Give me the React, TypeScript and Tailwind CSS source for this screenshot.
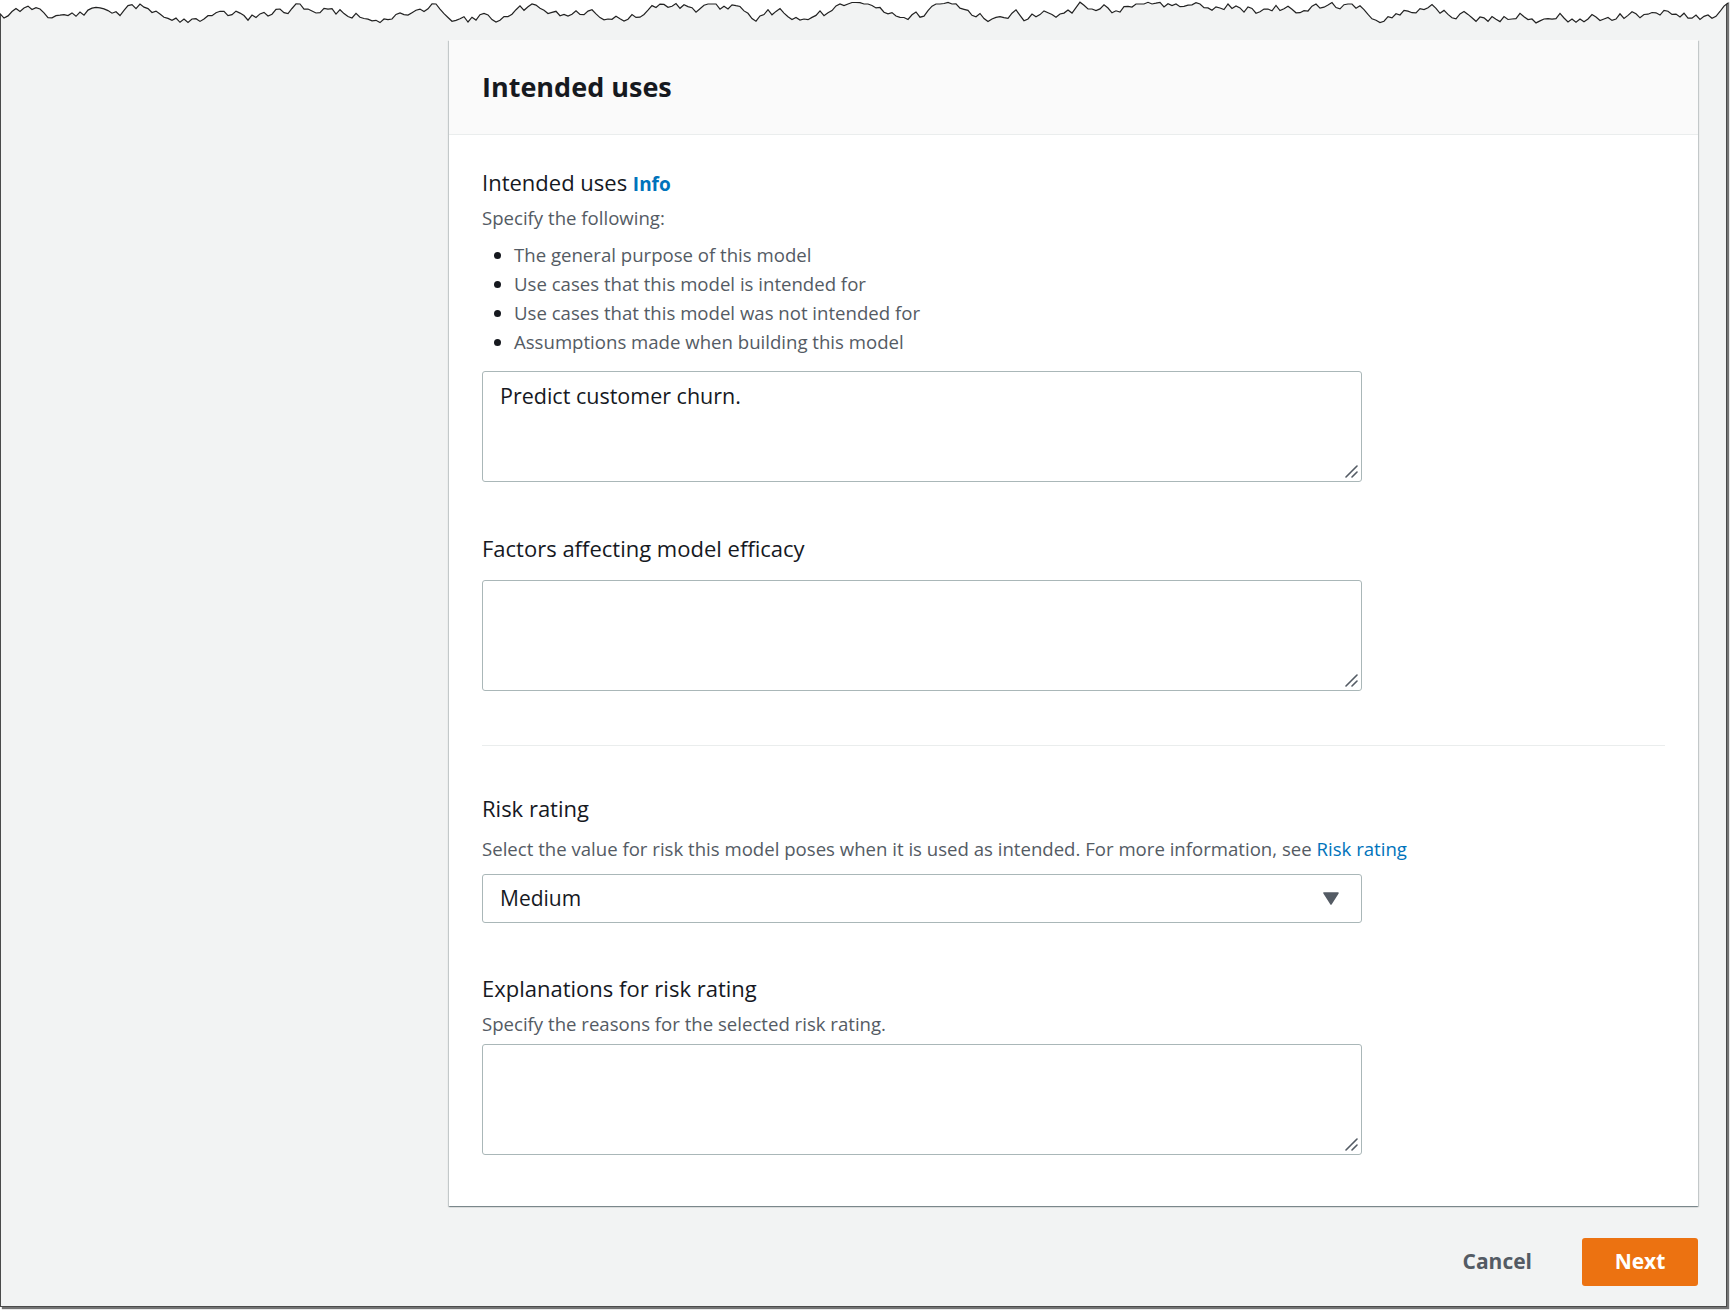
import React from "react";

const font = { fontFamily: "'Open Sans', 'Noto Sans', sans-serif" };

// jagged line for the torn top edge of the screenshot
function tornEdge() {
  const pts: string[] = [];
  let seed = 11;
  const rnd = () => {
    seed = (seed * 9301 + 49297) % 233280;
    return seed / 233280;
  };
  let y = 12;
  for (let x = 0; x <= 1730; x += 4) {
    y += (rnd() - 0.5) * 11;
    if (y < 2) y = 4;
    if (y > 23) y = 19;
    pts.push(`${x},${y.toFixed(1)}`);
  }
  return pts;
}

const edge = tornEdge();

function Grip() {
  return (
    <svg className="pointer-events-none absolute bottom-[4px] right-[4px]" width="14" height="14" viewBox="0 0 14 14">
      <path d="M2 13 L13 2 M8 13 L13 8" stroke="#545b64" strokeWidth="1.6" strokeLinecap="round" />
    </svg>
  );
}

function TextArea({ value }: { value?: string }) {
  return (
    <div className="relative w-[880px]">
      <textarea
        defaultValue={value}
        className="block h-[111px] w-[880px] resize-none rounded-[3px] border border-[#aab7b8] bg-white px-[17px] pt-[10px] text-[21.5px] leading-[28px] text-[#16191f] outline-none"
        style={font}
      />
      <Grip />
    </div>
  );
}

export default function App() {
  return (
    <div className="relative h-[1310px] w-[1730px] overflow-hidden bg-white" style={font}>
      <div className="h-[1307px] w-[1727px] border-x border-b border-[#4a4a4a] bg-[#f2f3f3] pl-[448px] pt-[40px] shadow-[2px_2px_1px_rgba(0,0,0,0.55)]">
        <div className="w-[1249px] bg-white shadow-[0_1px_1px_rgba(0,28,36,0.3),1px_1px_1px_rgba(0,28,36,0.15),-1px_1px_1px_rgba(0,28,36,0.15)]">
          <div className="flex h-[95px] items-center border-b border-[#eaeded] bg-[#fafafa] px-[33px]">
            <h2 className="text-[27px] font-bold text-[#16191f]">Intended uses</h2>
          </div>
          <div className="px-[33px] pb-[51px] pt-[33px]">
            <div className="text-[22px] leading-[28px] text-[#16191f]">
              Intended uses <span className="text-[19px] font-bold text-[#0073bb]">Info</span>
            </div>
            <div className="mt-[7px] text-[18.6px] leading-[26px] text-[#545b64]">Specify the following:</div>
            <ul className="mt-[9px] list-disc pl-[32px] text-[18.6px] leading-[29px] text-[#545b64] marker:text-[#16191f]">
              <li>The general purpose of this model</li>
              <li>Use cases that this model is intended for</li>
              <li>Use cases that this model was not intended for</li>
              <li>Assumptions made when building this model</li>
            </ul>
            <div className="mt-[15px]">
              <TextArea value="Predict customer churn." />
            </div>

            <div className="mt-[52px] text-[22px] leading-[28px] text-[#16191f]">Factors affecting model efficacy</div>
            <div className="mt-[18px]">
              <TextArea />
            </div>

            <div className="mt-[54px] border-t border-[#eaeded]" />

            <div className="mt-[48px] text-[22px] leading-[28px] text-[#16191f]">Risk rating</div>
            <div className="mt-[14px] text-[18.6px] leading-[26px] text-[#545b64]">
              Select the value for risk this model poses when it is used as intended. For more information, see{" "}
              <span className="text-[#0073bb]">Risk rating</span>
            </div>
            <div className="mt-[12px] flex h-[49px] w-[880px] items-center justify-between rounded-[3px] border border-[#aab7b8] pl-[17px] pr-[22px]">
              <span className="text-[21px] text-[#16191f]">Medium</span>
              <svg width="16" height="13" viewBox="0 0 16 13">
                <path d="M1 1 H15 L8 12 Z" fill="#545b64" stroke="#545b64" strokeWidth="1.5" strokeLinejoin="round" />
              </svg>
            </div>

            <div className="mt-[51px] text-[22px] leading-[28px] text-[#16191f]">Explanations for risk rating</div>
            <div className="mt-[9px] text-[18.6px] leading-[26px] text-[#545b64]">Specify the reasons for the selected risk rating.</div>
            <div className="mt-[7px]">
              <TextArea />
            </div>
          </div>
        </div>

        <div className="mt-[32px] flex w-[1249px] items-center justify-end gap-[50px]">
          <button className="text-[21px] font-bold text-[#545b64]">Cancel</button>
          <button className="h-[48px] w-[116px] rounded-[3px] bg-[#ec7211] text-[21px] font-bold text-white">Next</button>
        </div>
      </div>

      <svg className="absolute left-0 top-0" width="1730" height="26" viewBox="0 0 1730 26">
        <polygon points={`0,0 ${edge.join(" ")} 1730,0`} fill="#ffffff" />
        <polyline points={edge.join(" ")} fill="none" stroke="#222" strokeWidth="1.2" />
      </svg>
    </div>
  );
}
